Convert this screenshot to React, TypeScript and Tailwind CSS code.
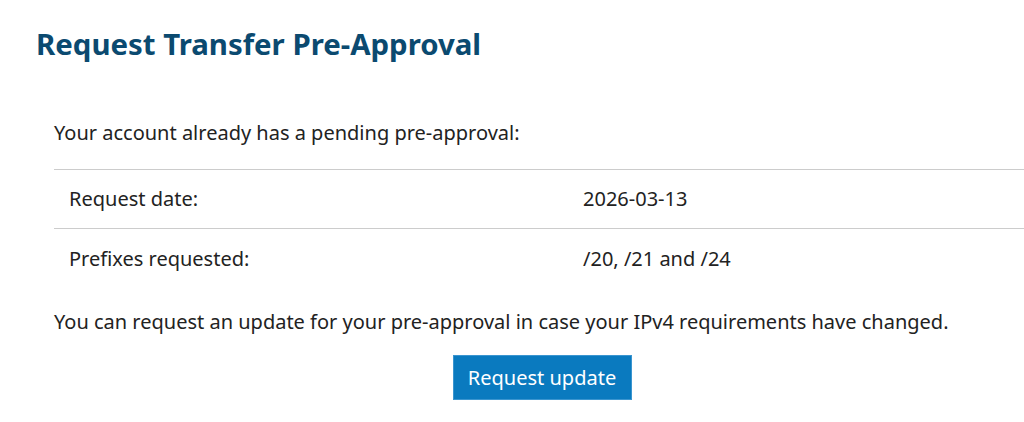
export default function App() {
  const rows = [
    { label: 'Request date:', value: '2026-03-13' },
    { label: 'Prefixes requested:', value: '/20, /21 and /24' },
  ];

  return (
    <div className="w-[1024px] h-[422px] overflow-hidden bg-white font-['Noto_Sans',sans-serif] text-[#222]">
      <h1 className="pl-[36px] pt-[25px] text-[29.4px] leading-[38px] font-bold text-[#0b4a70]">
        Request Transfer Pre-Approval
      </h1>

      <div className="pl-[54px] pt-[56px]">
        <p className="text-[20px] leading-[28px]">Your account already has a pending pre-approval:</p>

        <div className="mt-[22px] border-t border-[#cccccc]">
          {rows.map((row, i) => (
            <div
              key={row.label}
              className={`flex h-[59px] items-center text-[20px] leading-[28px] ${i < rows.length - 1 ? 'border-b border-[#cccccc]' : ''}`}
            >
              <div className="w-[529px] pl-[15px]">{row.label}</div>
              <div>{row.value}</div>
            </div>
          ))}
        </div>

        <p className="mt-[20px] text-[20px] leading-[28px]">
          You can request an update for your pre-approval in case your IPv4 requirements have changed.
        </p>

        <div className="mt-[19px] flex justify-center pl-[6px]">
          <button className="h-[45px] w-[179px] border border-[#3a95d0] bg-[#0a7abf] text-[20px] leading-[28px] text-white">
            Request update
          </button>
        </div>
      </div>
    </div>
  );
}
